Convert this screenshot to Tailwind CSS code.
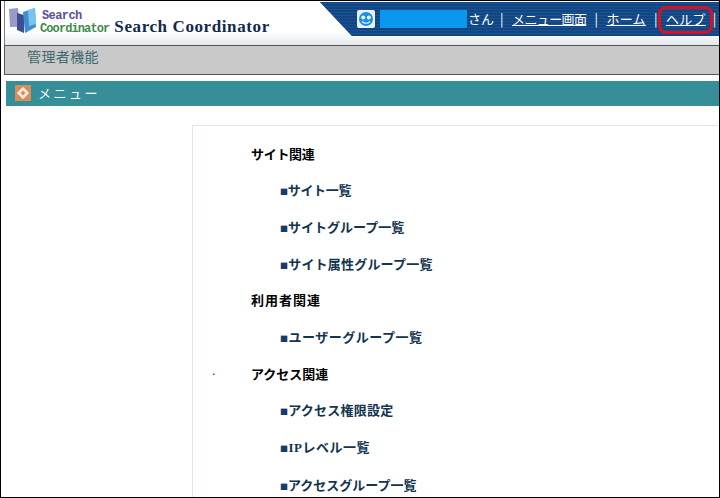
<!DOCTYPE html>
<html lang="ja">
<head>
  <meta charset="UTF-8" />
  <title>Search Coordinator</title>
  <script src="https://cdn.jsdelivr.net/npm/@tailwindcss/browser@4"></script>
</head>
<body class="bg-white w-[720px] h-[498px] overflow-hidden font-['Noto_Sans_CJK_JP','Liberation_Sans',sans-serif]">
  <div class="relative w-[720px] h-[498px] border border-black overflow-hidden">
    <!-- ヘッダー -->
    <div class="relative h-[44px] ml-[3px] border-l border-[#808080] bg-gradient-to-b from-white from-[70%] to-[#e4e8ec] flex items-start">
      <svg class="w-[30px] h-[28px] ml-[3px] mt-[6px] shrink-0" viewBox="0 0 30 28">
        <path d="M1 2 L10 1 L12 20 L2 20 Z" fill="#9a9ac8" />
        <path d="M9 6 L16 8 L16 26 L9 23 Z" fill="#3c4d96" />
        <path d="M15 5 L27 1 L28 20 L17 26 Z" fill="#3f8fd0" />
        <path d="M20 3 L27 1 L28 17 L21 19 Z" fill="#79c4ee" />
      </svg>
      <div class="mt-[9px] ml-[2px] font-['Liberation_Mono',monospace] font-bold text-[12px] leading-[13px] tracking-[-0.9px]">
        <div class="text-[#5a4f9c] ml-[2px] tracking-[-0.6px]">Search</div>
        <div class="text-[#3f8a4a]">Coordinator</div>
      </div>
      <div class="mt-[16px] ml-[5px] font-['Liberation_Serif',serif] font-bold text-[17px] leading-[20px] tracking-[0.6px] text-[#12294f] whitespace-nowrap">Search Coordinator</div>
      <!-- ナビ -->
      <div class="absolute top-[1px] left-[315px] right-0 h-[34px] bg-[#0f4683] bg-[repeating-linear-gradient(0deg,#0f4683_0,#0f4683_2px,#1c5290_2px,#1c5290_3px)] [clip-path:polygon(0_0,100%_0,100%_100%,32px_100%)] flex items-center pl-[37px] text-[13px] text-white whitespace-nowrap">
        <svg class="w-[18px] h-[18px] shrink-0" viewBox="0 0 18 18">
          <rect width="18" height="18" rx="2" fill="#e8f2fa" />
          <circle cx="9" cy="9" r="7" fill="#1e8fe0" />
          <circle cx="6.2" cy="7.5" r="2" fill="#e8f2fa" />
          <circle cx="11.8" cy="7.5" r="2" fill="#e8f2fa" />
          <path d="M5 11.5 Q9 15 13 11.5" stroke="#e8f2fa" stroke-width="1.2" fill="none" />
        </svg>
        <div class="w-[87px] h-[18px] ml-[5px] bg-[#0a97ee] shrink-0"></div>
        <span class="ml-[1px] w-[26px] shrink-0">さん</span>
        <span class="ml-[6px] w-[4px] shrink-0">|</span>
        <a class="ml-[8px] underline tracking-[-0.6px]">メニュー画面</a>
        <span class="ml-[8px] w-[4px] shrink-0">|</span>
        <a class="ml-[8px] underline tracking-[0.3px]">ホーム</a>
        <span class="ml-[8px] w-[4px] shrink-0">|</span>
        <a class="ml-[8px] underline tracking-[0.3px]">ヘルプ</a>
        <span class="ml-[7px] w-[4px] shrink-0">|</span>
      </div>
    </div>
    <!-- 管理者機能 -->
    <div class="ml-[3px] h-[30px] border-y border-[#555] border-l bg-[#c9c9c9] pl-[22px] text-[14px] tracking-[0.4px] leading-[21px] text-[#3e6b6f]">管理者機能</div>
    <!-- メニュー -->
    <div class="mt-[6px] ml-[5px] h-[25px] bg-[#368f98] flex items-center pl-[9px] text-white text-[13px]">
      <svg class="w-[16px] h-[16px] shrink-0 -mt-[2px]" viewBox="0 0 16 16">
        <rect width="16" height="16" fill="#d98e5a" />
        <path d="M8 2.5 L13.5 8 L8 13.5 L2.5 8 Z" fill="#fbe9d8" stroke="#fff" />
        <path d="M8 5.5 L10.5 8 L8 10.5 L5.5 8 Z" fill="#d98e5a" />
      </svg>
      <span class="ml-[7px] tracking-[2.5px] -mt-[2px]">メニュー</span>
    </div>
    <!-- 本文 -->
    <div class="relative ml-[191px] mt-[19px] h-[400px] border-l border-t border-[#dde8ea] pt-[16.5px] pl-[58px] font-bold text-[13px] leading-[21px]">
      <span class="absolute left-[18px] top-[243px] text-[10px] font-normal leading-none">·</span>
      <div class="text-black tracking-[-0.3px]">サイト関連</div>
      <div class="mt-[15.7px] ml-[29px] text-[#12344f] tracking-[-0.3px]"><span class="text-[#1a3a6b] text-[8px] leading-none">■</span>サイト一覧</div>
      <div class="mt-[15.7px] ml-[29px] text-[#12344f]"><span class="text-[#1a3a6b] text-[8px] leading-none">■</span>サイトグループ一覧</div>
      <div class="mt-[15.7px] ml-[29px] text-[#12344f] tracking-[0.2px]"><span class="text-[#1a3a6b] text-[8px] leading-none">■</span>サイト属性グループ一覧</div>
      <div class="mt-[15.7px] text-black tracking-[1px]">利用者関連</div>
      <div class="mt-[15.7px] ml-[29px] text-[#12344f] tracking-[0.5px]"><span class="text-[#1a3a6b] text-[8px] leading-none">■</span>ユーザーグループ一覧</div>
      <div class="mt-[15.7px] text-black">アクセス関連</div>
      <div class="mt-[15.7px] ml-[29px] text-[#12344f] tracking-[0.25px]"><span class="text-[#1a3a6b] text-[8px] leading-none">■</span>アクセス権限設定</div>
      <div class="mt-[15.7px] ml-[29px] text-[#12344f] tracking-[0.5px]"><span class="text-[#1a3a6b] text-[8px] leading-none">■</span><span class="font-['Liberation_Serif',serif]">IP</span>レベル一覧</div>
      <div class="mt-[15.7px] ml-[29px] text-[#12344f]"><span class="text-[#1a3a6b] text-[8px] leading-none">■</span>アクセスグループ一覧</div>
    </div>
    <!-- 赤枠 -->
    <div class="absolute left-[657px] top-[5px] w-[55px] h-[28px] border-[3px] border-[#d9101e] rounded-[8px]"></div>
  </div>
</body>
</html>
